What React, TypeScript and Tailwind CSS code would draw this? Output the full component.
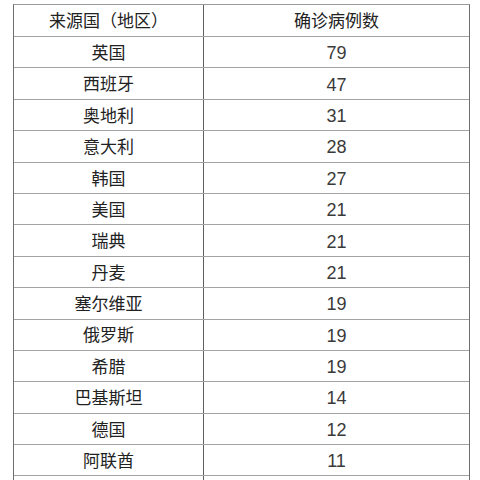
const rows: [string, string][] = [
  ['英国', '79'],
  ['西班牙', '47'],
  ['奥地利', '31'],
  ['意大利', '28'],
  ['韩国', '27'],
  ['美国', '21'],
  ['瑞典', '21'],
  ['丹麦', '21'],
  ['塞尔维亚', '19'],
  ['俄罗斯', '19'],
  ['希腊', '19'],
  ['巴基斯坦', '14'],
  ['德国', '12'],
  ['阿联酋', '11'],
]

export default function App() {
  return (
    <div
      className="w-[480px] h-[480px] overflow-hidden bg-white pt-[4px] pl-[13px]"
      style={{ fontFamily: '"Liberation Sans", "Noto Sans CJK SC", sans-serif' }}
    >
      <div className="w-[457px] border-l-[1.5px] border-r-[1.5px] border-t-[1.5px] border-[#6f6f6f] border-t-[#9a9a9a]">
        <div className="grid grid-cols-[190px_1fr] h-[32px] border-b-[1.5px] border-[#a3a3a3] text-[17px] text-[#222]">
          <div className="flex items-center justify-center pt-[3px] border-r-[1.5px] border-[#5f5f5f]">来源国（地区）</div>
          <div className="flex items-center justify-center pt-[3px]">确诊病例数</div>
        </div>
        {rows.map(([name, count]) => (
          <div
            key={name}
            className="grid grid-cols-[190px_1fr] h-[31.4px] border-b-[1.5px] border-[#a3a3a3] text-[#222]"
          >
            <div className="flex items-center justify-center pt-[3px] border-r-[1.5px] border-[#5f5f5f] text-[17px]">
              {name}
            </div>
            <div className="flex items-center justify-center pt-[3px] text-[18px] text-[#3a3a3a]">{count}</div>
          </div>
        ))}
        <div className="grid grid-cols-[190px_1fr] h-[20px]">
          <div className="border-r-[1.5px] border-[#5f5f5f]" />
          <div />
        </div>
      </div>
    </div>
  )
}
